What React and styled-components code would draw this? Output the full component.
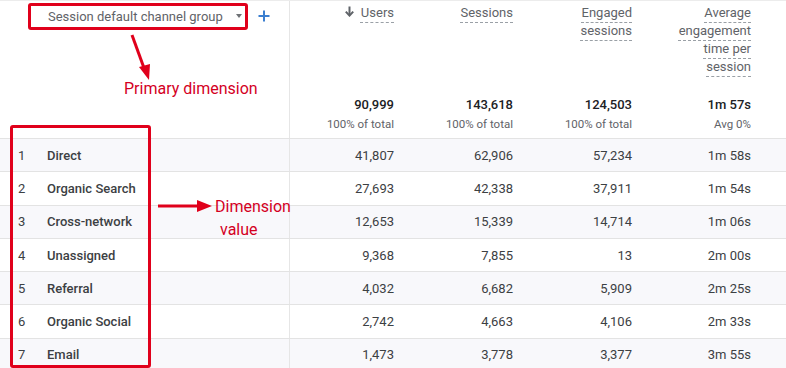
import React from 'react'
import styled, { createGlobalStyle } from 'styled-components'

const rows = [
	['Direct', '41,807', '62,906', '57,234', '1m 58s'],
	['Organic Search', '27,693', '42,338', '37,911', '1m 54s'],
	['Cross-network', '12,653', '15,339', '14,714', '1m 06s'],
	['Unassigned', '9,368', '7,855', '13', '2m 00s'],
	['Referral', '4,032', '6,682', '5,909', '2m 25s'],
	['Organic Social', '2,742', '4,663', '4,106', '2m 33s'],
	['Email', '1,473', '3,778', '3,377', '3m 55s'],
]

const metrics = [
	{ title: ['Users'], total: '90,999', sub: '100% of total', sorted: true },
	{ title: ['Sessions'], total: '143,618', sub: '100% of total' },
	{ title: ['Engaged', 'sessions'], total: '124,503', sub: '100% of total' },
	{ title: ['Average', 'engagement', 'time per', 'session'], total: '1m 57s', sub: 'Avg 0%' },
]

const SortArrow = () => (
	<svg width="9" height="11" viewBox="0 0 9 11">
		<path d="M4.5 0.5 V9" stroke="#5f6368" strokeWidth="2" fill="none" />
		<path d="M0.8 5.6 L4.5 9.6 L8.2 5.6" stroke="#5f6368" strokeWidth="2" fill="none" />
	</svg>
)

export default function App() {
	return (
		<>
			<GlobalStyle />
			<Table>

				<HeaderRow>
					<DimensionHead>
						<Selector>
							<SelectorLabel>Session default channel group</SelectorLabel>
							<Caret />
						</Selector>
						<PlusButton>
							<svg width="12" height="12" viewBox="0 0 12 12">
								<path d="M6 0.5 V11.5 M0.5 6 H11.5" stroke="#3b7fd0" strokeWidth="2" />
							</svg>
						</PlusButton>
					</DimensionHead>

					{metrics.map((m) => (
						<MetricHead key={m.total}>
							<MetricTitle>
								{m.title.map((line, i) => (
									<TitleLine key={line}>
										{m.sorted && i === 0 && <SortArrow />}
										<Dashed>{line}</Dashed>
									</TitleLine>
								))}
							</MetricTitle>
							<Totals>
								<TotalValue>{m.total}</TotalValue>
								<TotalSub>{m.sub}</TotalSub>
							</Totals>
						</MetricHead>
					))}
					<Filler />
				</HeaderRow>

				{rows.map((r, i) => (
					<Row key={r[0]} $shaded={i % 2 === 0}>
						<DimCell>
							<Rank>{i + 1}</Rank>
							<Label>{r[0]}</Label>
						</DimCell>
						{r.slice(1).map((v, j) => (
							<NumCell key={j}>{v}</NumCell>
						))}
						<Filler />
					</Row>
				))}

				{/* annotations lying over the table */}
				<AnnoBox $left={28} $top={2} $w={220} $h={27} />
				<AnnoBox $left={10} $top={124} $w={141} $h={243} />
				<AnnoArrows width="786" height="368">
					<line x1="132" y1="34" x2="144" y2="67" stroke="#e0001b" strokeWidth="3" />
					<polygon points="139,66 150,63 149,79" fill="#e0001b" />
					<line x1="158" y1="205" x2="199" y2="205" stroke="#e0001b" strokeWidth="3" />
					<polygon points="197,199 212,205 197,211" fill="#e0001b" />
				</AnnoArrows>
				<AnnoText $left={124} $top={78}>Primary dimension</AnnoText>
				<AnnoText $left={215} $top={196}>Dimension</AnnoText>
				<AnnoText $left={220} $top={219}>value</AnnoText>

			</Table>
		</>
	)
}


// * styled components
const GlobalStyle = createGlobalStyle`
	body{
		margin: 0;
		background: #fff;
		font-family: Roboto, "Liberation Sans", Arial, sans-serif;
		color: #3c4043;
	}
`
const Table = styled.div`
	position: relative;
	width: 786px;
	height: 368px;
	overflow: hidden;
	border-top: 1px solid #ececec;
	box-sizing: border-box;
`
const gridCols = `290px repeat(4, 119px) 1fr`

const HeaderRow = styled.div`
	display: grid;
	grid-template-columns: ${gridCols};
	height: 137px;
	border-bottom: 1px solid #e3e3e3;
`
const DimensionHead = styled.div`
	display: flex;
	align-items: flex-start;
	border-right: 1px solid #e6e6e6;
	padding: 4px 0 0 48px;
`
const Selector = styled.div`
	display: flex;
	align-items: center;
	height: 22px;
	width: 198px;
`
const SelectorLabel = styled.span`
	font-size: 13px;
	color: #5f6368;
	white-space: nowrap;
`
const Caret = styled.span`
	margin-left: auto;
	margin-right: 4px;
	width: 0;
	height: 0;
	border-left: 3.5px solid transparent;
	border-right: 3.5px solid transparent;
	border-top: 4px solid #6e7175;
`
const PlusButton = styled.span`
	display: flex;
	align-items: center;
	height: 22px;
	margin-left: 12px;
`
const MetricHead = styled.div`
	display: flex;
	flex-direction: column;
	align-items: flex-end;
	justify-content: space-between;
	padding: 2px 15px 6px 0;
	text-align: right;
`
const MetricTitle = styled.div`
	display: flex;
	flex-direction: column;
	align-items: flex-end;
`
const TitleLine = styled.div`
	display: flex;
	align-items: center;
	gap: 7px;
	height: 18px;
	font-size: 13px;
	color: #5f6368;
	white-space: nowrap;
	svg{
		margin-top: -1px;
	}
`
const Dashed = styled.span`
	text-decoration: underline dashed #9aa0a6;
	text-decoration-thickness: 1px;
	text-underline-offset: 5px;
`
const Totals = styled.div`
	display: flex;
	flex-direction: column;
	align-items: flex-end;
	gap: 3px;
`
const TotalValue = styled.div`
	font-size: 13px;
	line-height: 17px;
	font-weight: 500;
	color: #202124;
`
const TotalSub = styled.div`
	font-size: 11.5px;
	line-height: 16px;
	color: #5f6368;
`
const Filler = styled.div``

const Row = styled.div`
	display: grid;
	grid-template-columns: ${gridCols};
	height: 33.3px;
	box-sizing: border-box;
	border-bottom: 1px solid #e3e3e3;
	background: ${(p) => (p.$shaded ? '#f8f8fb' : '#fff')};
	font-size: 13px;
`
const DimCell = styled.div`
	display: flex;
	align-items: center;
	border-right: 1px solid #e6e6e6;
	padding-left: 18px;
`
const Rank = styled.span`
	width: 29px;
	color: #3c4043;
`
const Label = styled.span`
	font-weight: 500;
	color: #3c4043;
`
const NumCell = styled.div`
	display: flex;
	align-items: center;
	justify-content: flex-end;
	padding-right: 15px;
	color: #3c4043;
`
const AnnoBox = styled.div`
	position: absolute;
	left: ${(p) => p.$left}px;
	top: ${(p) => p.$top}px;
	width: ${(p) => p.$w}px;
	height: ${(p) => p.$h}px;
	box-sizing: border-box;
	border: 3px solid #e0001b;
	border-radius: 3px;
	pointer-events: none;
`
const AnnoArrows = styled.svg`
	position: absolute;
	left: 0;
	top: 0;
	pointer-events: none;
`
const AnnoText = styled.div`
	position: absolute;
	left: ${(p) => p.$left}px;
	top: ${(p) => p.$top}px;
	font-size: 16px;
	line-height: 20px;
	color: #d4001f;
	white-space: nowrap;
`
